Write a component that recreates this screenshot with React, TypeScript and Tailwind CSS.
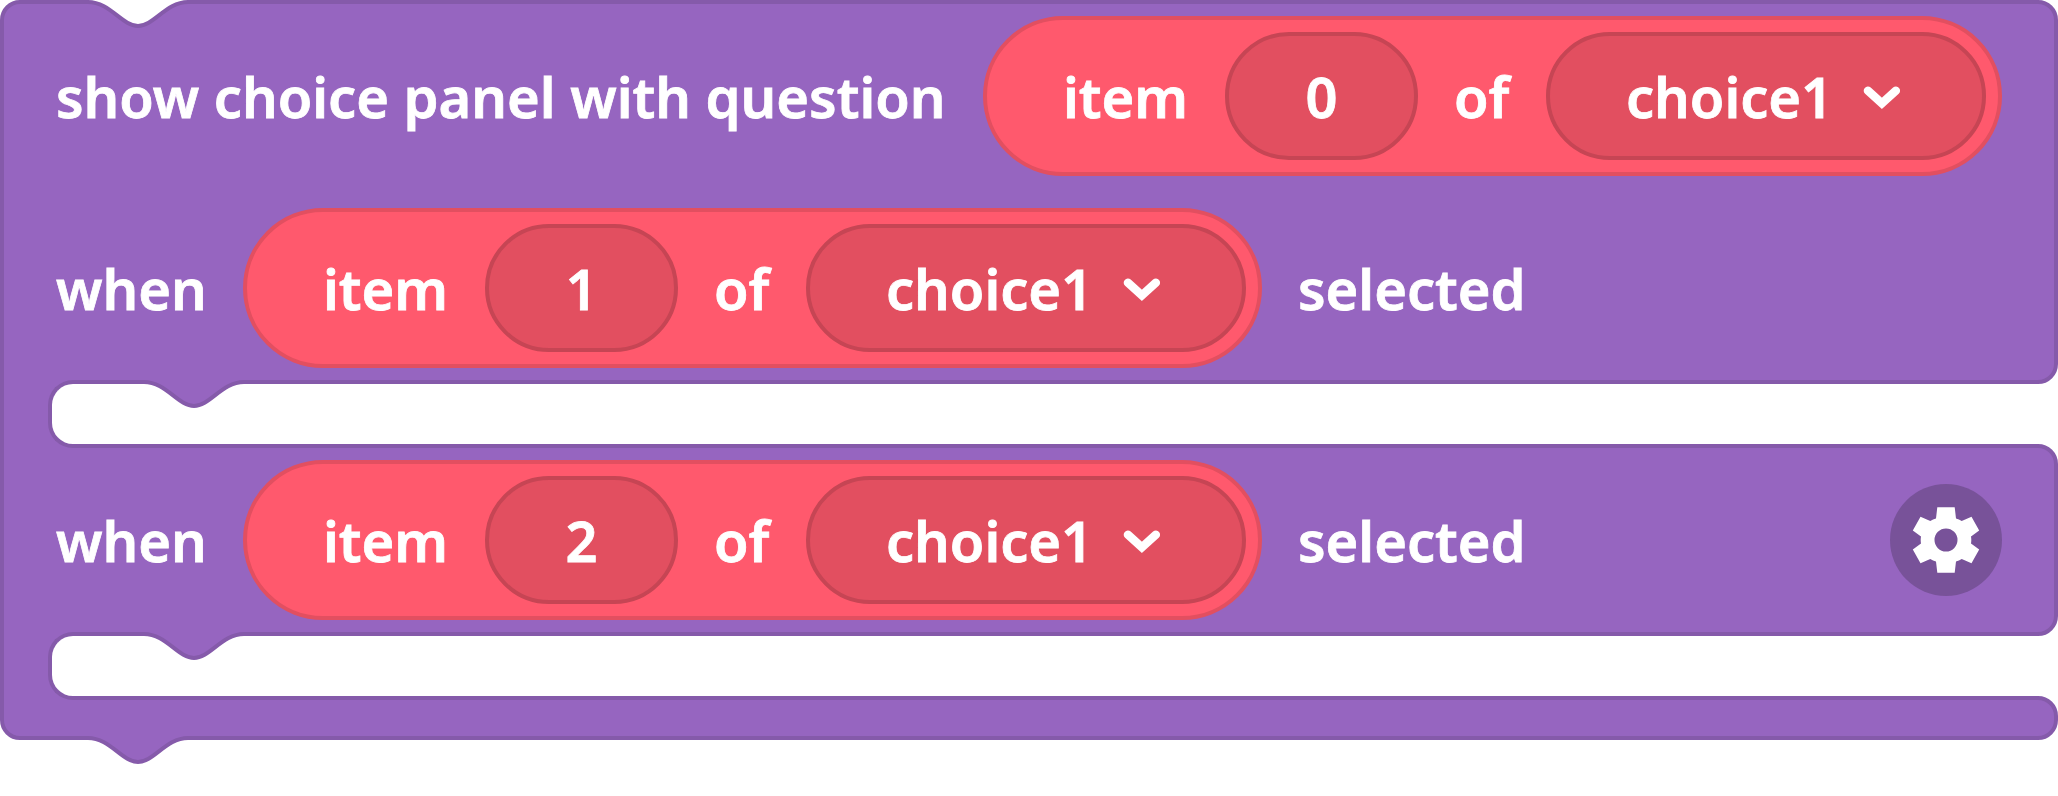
import React from "react";

function Chevron() {
  return (
    <svg className="block h-[24px] w-[38px] shrink-0" viewBox="0 0 38 24" fill="none">
      <path d="M4.9 4.7 L18.9 17.4 L32.9 4.7" stroke="#fff" strokeWidth="8.4" strokeLinecap="round" />
    </svg>
  );
}

function Gear() {
  const body =
    "M-10 -21.5 L-8.7 -32.8 H8.7 L10 -21.5 Q13 -20.6 15.7 -19 L25.5 -23.2 L33.2 -9.6 L25 -3.6 Q25.6 0 25 3.6 L33.2 9.6 L25.5 23.2 L15.7 19 Q13 20.6 10 21.5 L8.7 32.8 H-8.7 L-10 21.5 Q-13 20.6 -15.7 19 L-25.5 23.2 L-33.2 9.6 L-25 3.6 Q-25.6 0 -25 -3.6 L-33.2 -9.6 L-25.5 -23.2 L-15.7 -19 Q-13 -20.6 -10 -21.5 Z";
  const hole = "M0 -11.5 A11.5 11.5 0 1 0 0 11.5 A11.5 11.5 0 1 0 0 -11.5 Z";
  return (
    <button className="flex h-[112px] w-[112px] items-center justify-center rounded-full bg-[#785299]">
      <svg className="block h-[72px] w-[72px]" viewBox="-36 -36 72 72">
        <path d={body + hole} fill="#fff" fillRule="evenodd" />
      </svg>
    </button>
  );
}

const CURVE = "C22 2 34 26 50 26 C66 26 78 2 100 2";

/* Connector on a block edge: a white socket cut in, or a purple tab sticking out. */
function Notch({ kind, className }: { kind: "socket" | "tab"; className: string }) {
  return (
    <svg className={"absolute block h-[28px] w-[100px] " + className} viewBox="0 0 100 28">
      {kind === "socket" && <rect width="100" height="4" fill="#9665c0" />}
      <path d={"M0 0 V2 " + CURVE + " V0 Z"} fill={kind === "socket" ? "#fff" : "#9665c0"} />
      <path d={"M0 2 " + CURVE} fill="none" stroke="#855aaa" strokeWidth="4" />
    </svg>
  );
}

function ListItem({ index }: { index: number }) {
  return (
    <div className="flex h-[160px] w-[1019px] shrink-0 items-center rounded-full border-4 border-[#e24f60] bg-[#ff596d]">
      <span className="ml-[76px] w-[162px]">item</span>
      <span className="flex h-[128px] w-[193px] items-center justify-center rounded-full border-4 border-[#c64554] bg-[#e24f60]">
        {index}
      </span>
      <span className="ml-[36px] w-[92px]">of</span>
      <span className="flex h-[128px] w-[440px] items-center rounded-full border-4 border-[#c64554] bg-[#e24f60]">
        <span className="ml-[76px] w-[237px]">choice1</span>
        <span className="mt-[4px]">
          <Chevron />
        </span>
      </span>
    </div>
  );
}

function WhenRow({ index }: { index: number }) {
  return (
    <div className="flex h-[160px] items-center">
      <span className="w-[187px]">when</span>
      <ListItem index={index} />
      <span className="ml-[36px]">selected</span>
    </div>
  );
}

/* Empty statement slot, open on the right. */
function Slot() {
  return (
    <div className="relative z-10 -my-1 flex h-[68px] w-[80px] justify-end border-l-4 border-[#855aaa] bg-[#9665c0]">
      <div className="h-[68px] w-[32px] rounded-l-[25px] border-y-4 border-l-4 border-[#855aaa] bg-white" />
      <Notch kind="tab" className="top-0 left-[140px]" />
    </div>
  );
}

export default function App() {
  return (
    <main className="h-[796px] w-[2058px] overflow-hidden bg-white font-['Noto_Sans',sans-serif] text-[56px] leading-[76px] font-semibold whitespace-nowrap text-white [-webkit-text-stroke:0.8px_white]">
      <section className="relative flex h-[384px] flex-col gap-[32px] rounded-t-[20px] rounded-br-[20px] border-4 border-[#855aaa] bg-[#9665c0] pt-[12px] pl-[52px]">
        <Notch kind="socket" className="-top-1 left-[84px]" />
        <div className="flex h-[160px] items-center">
          <span className="w-[927px]">show choice panel with question</span>
          <ListItem index={0} />
        </div>
        <WhenRow index={1} />
      </section>
      <Slot />
      <section className="flex h-[192px] items-center justify-between rounded-r-[20px] border-4 border-[#855aaa] bg-[#9665c0] pr-[52px] pl-[52px]">
        <WhenRow index={2} />
        <Gear />
      </section>
      <Slot />
      <section className="relative h-[44px] rounded-r-[20px] rounded-bl-[20px] border-4 border-[#855aaa] bg-[#9665c0]">
        <Notch kind="tab" className="top-[36px] left-[84px]" />
      </section>
    </main>
  );
}
